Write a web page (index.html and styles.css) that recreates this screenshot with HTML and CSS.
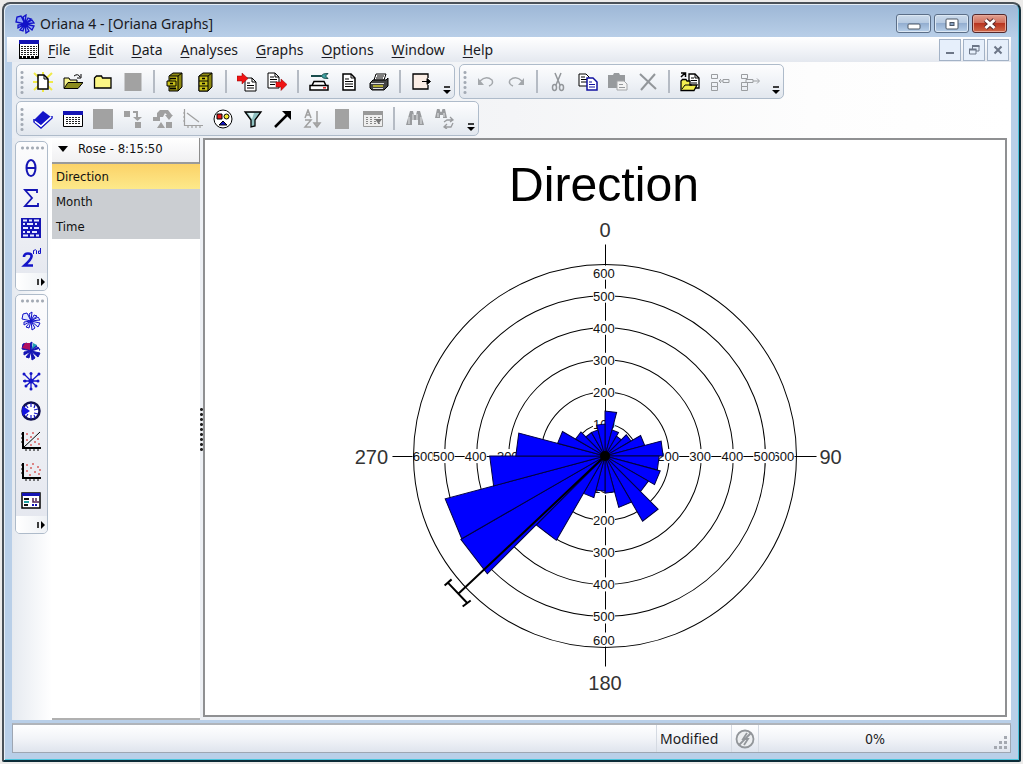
FILE: index.html
```html
<!DOCTYPE html>
<html lang="en">
<head>
<meta charset="utf-8">
<title>Oriana 4 - [Oriana Graphs]</title>
<link rel="stylesheet" href="styles.css">
</head>
<body>
<svg class="sprite" aria-hidden="true">
  <defs>
    <g id="rose-shape">
      <path d="M10 10 8 3 11 1ZM10 10 13 4 16 5ZM10 10 17 6 19 9ZM10 10 19 12 17 16ZM10 10 14 17 11 19ZM10 10 8 17 5 16ZM10 10 3 14 3 11ZM10 10 1 8 2 3 6 2Z"/>
    </g>
    <g id="table-shape">
      <path fill="#fff" stroke="#000" d="M.5 2.500h19v15h-19z"/>
      <path fill="#1414b4" d="M0 2h20v4H0z"/>
      <path stroke="#222" stroke-dasharray="2 1" d="M3 8.500h15M3 10.500h15M3 12.500h15M3 14.500h15"/>
    </g>
  </defs>
</svg>
<div class="window">
  <header class="titlebar">
    <svg class="icon app-icon" viewBox="0 0 20 20"><g fill="#8fa6f4" stroke="#1212c8" stroke-width="1.300"><use href="#rose-shape"/></g><circle cx="10" cy="10" r="2.500" fill="#1212c8"/></svg>
    <h1 class="title">Oriana 4 - [Oriana Graphs]</h1>
    <div class="caption-buttons">
      <button class="cap" aria-label="Minimize"><svg class="icon" viewBox="0 0 20 20"><rect x="4" y="10" width="12" height="5" rx="1" fill="#fff" stroke="#4b5665"/></svg></button>
      <button class="cap" aria-label="Maximize"><svg class="icon" viewBox="0 0 20 20"><rect x="4" y="5" width="12" height="10" rx="1" fill="#fff" stroke="#4b5665"/><rect x="8" y="8.500" width="4" height="3" fill="#8ba4c4" stroke="#4b5665"/></svg></button>
      <button class="cap cap-close" aria-label="Close"><svg class="icon" viewBox="0 0 20 20"><path d="M5.500 6l9 8M14.500 6l-9 8" stroke="#5a2a2a" stroke-width="5"/><path d="M5.500 6l9 8M14.500 6l-9 8" stroke="#fff" stroke-width="3"/></svg></button>
    </div>
  </header>
  <nav class="menubar">
    <svg class="icon doc-icon" viewBox="0 0 20 20"><path fill="#fff" stroke="#000" d="M.5.5h19v18H.5z"/><path fill="#1414b4" d="M0 0h20v4H0z"/><path stroke="#222" stroke-dasharray="2 1" stroke-width="1" d="M2 6.500h16M2 8.500h16M2 10.500h16M2 12.500h16M2 14.500h16"/><path stroke="#000" stroke-width="3" stroke-dasharray="3 1" d="M0 17.500h20"/></svg>
    <button class="menu"><u>F</u>ile</button>
    <button class="menu"><u>E</u>dit</button>
    <button class="menu"><u>D</u>ata</button>
    <button class="menu"><u>A</u>nalyses</button>
    <button class="menu"><u>G</u>raphs</button>
    <button class="menu"><u>O</u>ptions</button>
    <button class="menu"><u>W</u>indow</button>
    <button class="menu"><u>H</u>elp</button>
    <div class="mdi-buttons">
      <button class="mdi" aria-label="Minimize document"><svg class="icon" viewBox="0 0 20 20"><path d="M6 13h8" stroke="#6c7687" stroke-width="2"/></svg></button>
      <button class="mdi" aria-label="Restore document"><svg class="icon" viewBox="0 0 20 20"><path d="M8.500 9V6h6.500v5h-3M5.500 9.500h6.500v4.500H5.500z" fill="none" stroke="#6c7687"/><path d="M8 6h7.500M5 9.500h7.500" stroke="#6c7687" stroke-width="2"/></svg></button>
      <button class="mdi" aria-label="Close document"><svg class="icon" viewBox="0 0 20 20"><path d="M6.500 6.500l7 7M13.500 6.500l-7 7" stroke="#6c7687" stroke-width="2"/></svg></button>
    </div>
  </nav>
  <div class="client">
    <div class="toolbars">
      <div class="toolbar-row">
        <div class="toolbar" role="toolbar" aria-label="File">
          <button class="tool" aria-label="New"><svg class="icon" viewBox="0 0 20 20"><path d="M1 1l18 17M19 1L1 18M10 0v20M0 10h20" stroke="#f0ea48" stroke-width="2"/><path d="M5 3h6l4 4v10H5z" fill="#fff" stroke="#000" stroke-width="1.500"/><path d="M11 3v4h4" fill="none" stroke="#000"/></svg></button>
          <button class="tool" aria-label="Open"><svg class="icon" viewBox="0 0 20 20"><path d="M1 16V6h5l1 2h7v3" fill="#f6f28a" stroke="#000"/><path d="M1 16.500l4-6h15l-5 6z" fill="#8c8c1e" stroke="#000"/><path d="M11 4q4-3 6 1M18 2v4h-4" fill="none" stroke="#000"/></svg></button>
          <button class="tool" aria-label="Close file"><svg class="icon" viewBox="0 0 20 20"><path d="M1.500 16V6l2-2h5l1 2h8.500v10z" fill="#fbf685" stroke="#000" stroke-width="1.300"/></svg></button>
          <button class="tool" aria-label="Save" disabled><svg class="icon" viewBox="0 0 20 20"><path fill="#a2a2a2" d="M1.500 1h17v18h-17z"/></svg></button>
          <span class="sep"></span>
          <button class="tool" aria-label="Open database"><svg class="icon" viewBox="0 0 20 20"><path d="M4 4l4-3h9v14l-4 4H4z" fill="#8f8a12" stroke="#000"/><path d="M4 4h9v15M13 4l4-3M2 9h9v5H2z" fill="#c8c018" stroke="#000"/><path d="M5 6.500h6M5 16.500h6M5 11.500h3" stroke="#000" stroke-width="1.500"/></svg></button>
          <button class="tool" aria-label="Database"><svg class="icon" viewBox="0 0 20 20"><path d="M4 4l4-3h9v14l-4 4H4z" fill="#8f8a12" stroke="#000"/><path d="M4 4h9v15H4zM13 4l4-3M4 9h9M4 14h9" fill="#c8c018" stroke="#000"/><path d="M7 6.500h3M7 11.500h3M7 16.500h3" stroke="#000" stroke-width="1.500"/></svg></button>
          <span class="sep"></span>
          <button class="tool" aria-label="Import"><svg class="icon" viewBox="0 0 20 20"><path d="M8 6h7l4 4v9H8z" fill="#fff" stroke="#000"/><path d="M10 11h3M10 13.500h7M10 16h7M15 6v4h4" stroke="#000" fill="none"/><path d="M0 4h5V1l6 5.500L5 12V9H0z" fill="#f01414" stroke="#8c0000" stroke-width=".5"/></svg></button>
          <button class="tool" aria-label="Export"><svg class="icon" viewBox="0 0 20 20"><path d="M1 1h7l4 4v11H1z" fill="#fff" stroke="#000"/><path d="M3 5h4M3 7.500h7M3 10h7M3 12.500h5M8 1v4h4" stroke="#000" fill="none"/><path d="M9 10h5V7l6 5.500-6 6V15H9z" fill="#f01414" stroke="#8c0000" stroke-width=".5"/></svg></button>
          <span class="sep"></span>
          <button class="tool" aria-label="Page setup"><svg class="icon" viewBox="0 0 20 20"><path d="M2 4h10" stroke="#174b4b" stroke-width="2"/><path d="M12 4q2-3 7-2.500L16.500 4 19 6.500Q14 7 12 4z" fill="#3fa6a6" stroke="#174b4b"/><path d="M3 13.500l2-4h10l2 4M1 13.500h18V18H1z" fill="#fff" stroke="#000" stroke-width="1.500"/><path d="M14 15.800h3" stroke="#e02020" stroke-width="1.500"/></svg></button>
          <button class="tool" aria-label="Preview"><svg class="icon" viewBox="0 0 20 20"><path d="M4 2h8l4 4v12H4z" fill="#fff" stroke="#000" stroke-width="1.500"/><path d="M6 7h4M6 9.500h8M6 12h8M6 14.500h8M12 2v4h4" stroke="#000" fill="none"/></svg></button>
          <button class="tool" aria-label="Print"><svg class="icon" viewBox="0 0 20 20"><path d="M5 8l2-6h10l-2 6z" fill="#fff" stroke="#000"/><path d="M8 4h7M7 6h7" stroke="#000"/><path d="M1 11l3-3h13l2-2v8l-4 4H3l-2-2z" fill="#444" stroke="#000"/><path d="M2 11.500h13M4 16.500h10" stroke="#ddd"/><path d="M4 14h10" stroke="#d8d030" stroke-width="1.500"/></svg></button>
          <span class="sep"></span>
          <button class="tool" aria-label="Exit"><svg class="icon" viewBox="0 0 20 20"><path d="M17 6V2H2v15h15v-4" fill="#fbeee6" stroke="#000" stroke-width="1.300"/><path d="M11 9.500h8M16 6.500l3.500 3-3.500 3z" fill="#000" stroke="#000"/></svg></button>
          <button class="overflow" aria-label="More file tools"><svg class="chev" viewBox="0 0 8 8"><path d="M1 1h6" stroke="#000" stroke-width="1.500"/><path d="M0 4h8L4 8z"/></svg></button>
        </div>
        <div class="toolbar" role="toolbar" aria-label="Edit">
          <button class="tool" aria-label="Undo" disabled><svg class="icon" viewBox="0 0 20 20"><path d="M4 9q6-6 12-1 2 4-3 6" fill="none" stroke="#a4a8ac" stroke-width="1.500"/><path d="M2 6v7h6z" fill="#a4a8ac"/></svg></button>
          <button class="tool" aria-label="Redo" disabled><svg class="icon" viewBox="0 0 20 20"><path d="M16 9Q10 3 4 8q-2 4 3 6" fill="none" stroke="#a4a8ac" stroke-width="1.500"/><path d="M18 6v7h-6z" fill="#a4a8ac"/></svg></button>
          <span class="sep"></span>
          <button class="tool" aria-label="Cut" disabled><svg class="icon" viewBox="0 0 20 20"><path d="M7 1l5 12M13 1L8 13" stroke="#92969a" stroke-width="1.500"/><g fill="none" stroke="#92969a" stroke-width="1.500"><ellipse cx="6.500" cy="15.500" rx="2" ry="3"/><ellipse cx="13.500" cy="15.500" rx="2" ry="3"/></g></svg></button>
          <button class="tool" aria-label="Copy"><svg class="icon" viewBox="0 0 20 20"><path d="M1 2h7l3 3v9H1z" fill="#fff" stroke="#000"/><path d="M3 5h4M3 7.500h6M3 10h6" stroke="#000"/><path d="M9 6h6l4 4v8H9z" fill="#fff" stroke="#1212a0" stroke-width="1.500"/><path d="M11 10h3M11 12.500h6M11 15h6" stroke="#1212a0"/></svg></button>
          <button class="tool" aria-label="Paste" disabled><svg class="icon" viewBox="0 0 20 20"><path d="M0 3h5l1-2h5l1 2h5v13H0z" fill="#979a9d"/><path d="M9 9h7l3 3v6H9z" fill="#f4f4f4" stroke="#a4a6a8"/><path d="M11 12.500h4M11 15.500h6" stroke="#979a9d"/></svg></button>
          <button class="tool" aria-label="Delete" disabled><svg class="icon" viewBox="0 0 20 20"><path d="M2 2l16 15M17 2L3 18" stroke="#92969a" stroke-width="2"/></svg></button>
          <span class="sep"></span>
          <button class="tool" aria-label="Open data"><svg class="icon" viewBox="0 0 20 20"><path d="M9 2h6l4 4v10H9z" fill="#fff" stroke="#000" stroke-width="1.300"/><path d="M11 6h3M11 8.500h6M11 11h6M15 2v4h4" stroke="#000" fill="none"/><path d="M1 18V9l1.500-1.500H6L7 9h3v4h7l-3 5.500H1z" fill="#f2ee50" stroke="#000" stroke-width="1.300"/><path d="M2 17l3-4h7" fill="none" stroke="#000"/><path d="M1 5l4-4M1 1h4.500v4" fill="none" stroke="#000" stroke-width="1.500"/></svg></button>
          <button class="tool" aria-label="Insert variable" disabled><svg class="icon" viewBox="0 0 20 20"><path d="M1.500 2.500h6v4h-6zM1.500 10.500h6v4h-6zM1.500 14.500h6v4h-6zM13 7.500h6v3h-6zM13 9H9M11 7L9 9l2 2" fill="none" stroke="#9a9da0"/></svg></button>
          <button class="tool" aria-label="Remove variable" disabled><svg class="icon" viewBox="0 0 20 20"><path d="M1.500 2.500h6v4h-6zM1.500 10.500h6v4h-6zM1.500 14.500h6v4h-6zM6 7.500h7v3H6zM13 9h6M17 6.500L19.500 9 17 11.500" fill="none" stroke="#9a9da0"/></svg></button>
          <button class="overflow" aria-label="More edit tools"><svg class="chev" viewBox="0 0 8 8"><path d="M1 1h6" stroke="#000" stroke-width="1.500"/><path d="M0 4h8L4 8z"/></svg></button>
        </div>
      </div>
      <div class="toolbar-row">
        <div class="toolbar" role="toolbar" aria-label="Data">
          <button class="tool" aria-label="Notebook"><svg class="icon" viewBox="0 0 20 20"><path d="M1 11l9-9 8 6-10 9z" fill="#1414c8"/><path d="M1 10v3l7 6L19 9V7" fill="none" stroke="#1414c8" stroke-width="1.500"/><path d="M2 12.500l6 4.500 10-9" stroke="#fff" stroke-width="1.500" fill="none"/></svg></button>
          <button class="tool" aria-label="Data editor"><svg class="icon" viewBox="0 0 20 20"><use href="#table-shape"/></svg></button>
          <button class="tool" aria-label="Stop" disabled><svg class="icon" viewBox="0 0 20 20"><path fill="#a2a2a2" d="M0 0h20v20H0z"/></svg></button>
          <button class="tool" aria-label="Transform" disabled><svg class="icon" viewBox="0 0 20 20"><path fill="#a0a0a0" d="M1 2h6v6H1zM12 13h6v6h-6z"/><path d="M10 3h4v6" fill="none" stroke="#a0a0a0" stroke-width="2"/><path d="M10 8h9l-4.500 4z" fill="#a0a0a0"/></svg></button>
          <button class="tool" aria-label="Recode" disabled><svg class="icon" viewBox="0 0 20 20"><path fill="#a0a0a0" d="M4 4l3-3h8l4 5h1l-4 5-4-5h2l-2-2-2 4H7v4H0V8h4zM13 13h6v6h-6zM4 19l4-6 4 6z"/></svg></button>
          <button class="tool" aria-label="Regression" disabled><svg class="icon" viewBox="0 0 20 20"><path d="M1.500 0v16.500H20M4 4l12 9M0 4h2M0 8h2M0 12h2M5 16v3M9 16v3M13 16v3M17 16v3" fill="none" stroke="#a0a0a0" stroke-width="1.200"/></svg></button>
          <button class="tool" aria-label="Graph shapes"><svg class="icon" viewBox="0 0 20 20"><circle cx="10" cy="10" r="9" fill="#fff" stroke="#000"/><path d="M4 5h5v5H4z" fill="#e81818" stroke="#000"/><circle cx="13.500" cy="7.500" r="2.500" fill="#f4ec30" stroke="#000"/><path d="M6 16l4-4 4 4z" fill="#1414c8" stroke="#000"/></svg></button>
          <button class="tool" aria-label="Filter"><svg class="icon" viewBox="0 0 20 20"><path d="M2 3h16l-6 8v6l-4 1v-7z" fill="#8fc0c0" stroke="#000" stroke-width="1.300"/><path d="M5 4h6l-2 6z" fill="#e4f6f6"/></svg></button>
          <button class="tool" aria-label="Arrow"><svg class="icon" viewBox="0 0 20 20"><path d="M2 18L14 6" stroke="#000" stroke-width="2.500"/><path d="M9 2h9v9l-3-3-3-3z"/></svg></button>
          <button class="tool" aria-label="Sort" disabled><svg class="icon" viewBox="0 0 20 20"><path d="M2 9l3-8 3 8M3 6h4M2 11h6l-6 7h6M14 2v15M11 14l3 4 3-4z" fill="none" stroke="#a0a0a0" stroke-width="1.500"/></svg></button>
          <button class="tool" aria-label="Column" disabled><svg class="icon" viewBox="0 0 20 20"><path fill="#a2a2a2" d="M2 0h14v20H2z"/></svg></button>
          <button class="tool" aria-label="Choose cells" disabled><svg class="icon" viewBox="0 0 20 20"><path d="M.5 2.500h19v15H.5z" fill="#eee" stroke="#999"/><path d="M0 2h20v4H0z" fill="#999"/><path stroke="#888" stroke-dasharray="2 2" d="M3 8.500h15M3 10.500h15M3 12.500h15M3 14.500h15"/><path d="M12 10h7l-3.500 5z" fill="#777"/></svg></button>
          <span class="sep"></span>
          <button class="tool" aria-label="Find" disabled><svg class="icon" viewBox="0 0 20 20"><path d="M5 2h3l1 4h2l1-4h3l4 14h-6v-5H7v5H1z" fill="#999b9e"/><path d="M4 8v7M8 5v6M12 5v6M16 8v7" stroke="#e4e6e8"/></svg></button>
          <button class="tool" aria-label="Replace" disabled><svg class="icon" viewBox="0 0 20 20"><path d="M2 0h2.500l1 3h1l1-3H10l2 9H8V6H5v3H0z" fill="#999b9e"/><path d="M3 4v4M9 4v4" stroke="#e4e6e8"/><path d="M9 13l3-2h5M15 8l3 3-3 2M18 14l-2 4H9M12 15l-3 3 3 2" fill="none" stroke="#999b9e" stroke-width="1.300"/></svg></button>
          <button class="overflow" aria-label="More data tools"><svg class="chev" viewBox="0 0 8 8"><path d="M1 1h6" stroke="#000" stroke-width="1.500"/><path d="M0 4h8L4 8z"/></svg></button>
        </div>
      </div>
    </div>
    <div class="workspace">
      <div class="side-tools">
        <div class="vtoolbar" role="toolbar" aria-label="Statistics">
          <button class="tool" aria-label="Circular statistics"><svg class="icon" viewBox="0 0 20 20"><ellipse cx="10" cy="10" rx="4.500" ry="8" fill="none" stroke="#1414b4" stroke-width="2"/><path d="M6 10h8" stroke="#1414b4" stroke-width="2"/></svg></button>
          <button class="tool" aria-label="Linear statistics"><svg class="icon" viewBox="0 0 20 20"><path d="M16 5V2H4l7 8-7 8h13v-3" fill="none" stroke="#1414b4" stroke-width="1.800"/></svg></button>
          <button class="tool" aria-label="Multisample"><svg class="icon" viewBox="0 0 20 20"><path fill="#1414b4" d="M0 0h20v20H0z"/><path d="M2 2.500h4M8 2.500h3M13 2.500h5M2 6h2M6 6h6M14 6h2M2 10h5M9 10h2M13 10h5M2 14h2M6 14h3M11 14h5M2 17.500h5M9 17.500h4M15 17.500h3" stroke="#e8eaff" stroke-width="2"/></svg></button>
          <button class="tool" aria-label="Second order statistics"><svg class="icon" viewBox="0 0 20 20"><path d="M3 9q0-3.500 4-3.500t3.500 3q0 2.500-7 9H12" fill="none" stroke="#1414c8" stroke-width="2.600"/><path d="M12.500 6V2.500q3-1.500 3 0V6M19.500 0v5.500h-2V3h2" fill="none" stroke="#1414c8"/></svg></button>
          <button class="voverflow" aria-label="More statistics"><svg class="chev" viewBox="0 0 8 8"><path d="M1 1v6" stroke="#000" stroke-width="1.500"/><path d="M4 0v8l4-4z"/></svg></button>
        </div>
        <div class="vtoolbar" role="toolbar" aria-label="Graphs">
          <button class="tool" aria-label="Rose diagram"><svg class="icon" viewBox="0 0 20 20"><g fill="#e4eaff" stroke="#1212c8"><use href="#rose-shape"/></g></svg></button>
          <button class="tool" aria-label="Stacked rose"><svg class="icon" viewBox="0 0 20 20"><g fill="#1414b4" stroke="#1414b4"><use href="#rose-shape"/></g><path d="M9 9L1 7l3-5h5z" fill="#b01060"/><path d="M11 8l1-6 4 2z" fill="#20a0b0"/><path d="M12 10l6-2v2z" fill="#fff"/></svg></button>
          <button class="tool" aria-label="Raw data plot"><svg class="icon" viewBox="0 0 20 20"><path d="M10 2v16M2 10h16M3 3l12 12M18 3L5 15" stroke="#1414c8" stroke-width="1.300"/><g fill="#1414c8"><circle cx="10" cy="10" r="2.500"/><circle cx="10" cy="2.500" r="1.500"/><circle cx="10" cy="18" r="1.500"/><circle cx="4" cy="10" r="1.500"/><circle cx="17" cy="10" r="1.500"/><circle cx="3" cy="3" r="1.500"/><circle cx="18" cy="3" r="1.500"/><circle cx="5" cy="15" r="1.500"/><circle cx="15" cy="15" r="1.500"/></g></svg></button>
          <button class="tool" aria-label="Circular histogram"><svg class="icon" viewBox="0 0 20 20"><circle cx="10" cy="10" r="8.500" fill="#fff" stroke="#101050" stroke-width="2.500"/><path d="M9 10L2 5q-2 5 0 10z" fill="#1414e0"/><path d="M10 2v4M10 14v4M14 4l-1 3M17 8l-4 1M17 13l-4-1M14 17l-1-3M5 16l2-3M5 4l2 3" stroke="#1414c8" stroke-width="1.200"/></svg></button>
          <button class="tool" aria-label="Distribution plot"><svg class="icon" viewBox="0 0 20 20"><path d="M2 1v16h18" fill="none" stroke="#000" stroke-width="2"/><path d="M2 17L19 1" stroke="#000"/><path d="M0 3h2M0 7h2M0 11h2M4 19h15" stroke="#000" stroke-dasharray="2 2"/><path d="M5 3h2M11 2h2M5 9h2M9 6h2M16 8h2M13 11h2M17 13h2M9 14h2" stroke="#d86060" stroke-width="1.500"/></svg></button>
          <button class="tool" aria-label="Scatter plot"><svg class="icon" viewBox="0 0 20 20"><path d="M2 2v15h18" fill="none" stroke="#000" stroke-width="2"/><path d="M0 4h2M0 8h2M0 12h2M4 19h15" stroke="#000" stroke-dasharray="2 2"/><path d="M5 4h2M11 3h2M5 10h2M9 7h2M16 6h2M13 11h2M17 13h2M8 14h2M18 9h2" stroke="#d86060" stroke-width="1.500"/></svg></button>
          <button class="tool" aria-label="Graph gallery"><svg class="icon" viewBox="0 0 20 20"><path d="M1 2h18v15H1z" fill="#fff" stroke="#000" stroke-width="1.500"/><path d="M1 2h18v3H1z" fill="#1414b4"/><path d="M3 8h5M3 14h4" stroke="#111" stroke-width="2" /><path d="M3 11h5" stroke="#20a0a0" stroke-width="2"/><path d="M12 7v4h6M15 7v3" fill="none" stroke="#502050" stroke-width="1.500"/><path d="M11 14h6" stroke="#1414b4" stroke-width="2" stroke-dasharray="2 1"/></svg></button>
          <button class="voverflow" aria-label="More graphs"><svg class="chev" viewBox="0 0 8 8"><path d="M1 1v6" stroke="#000" stroke-width="1.500"/><path d="M4 0v8l4-4z"/></svg></button>
        </div>
      </div>
      <aside class="graph-list">
        <button class="list-head"><svg class="caret" viewBox="0 0 10 6"><path d="M0 0h10L5 6z"/></svg>Rose - 8:15:50</button>
        <button class="list-item selected">Direction</button>
        <button class="list-item">Month</button>
        <button class="list-item">Time</button>
      </aside>
      <div class="splitter"></div>
      <main class="graph-pane">
        <svg id="chart" class="chart" viewBox="206 141 798 573" role="img" aria-label="Rose diagram of Direction"></svg>
      </main>
    </div>
  </div>
  <footer class="statusbar">
    <span class="status-main"></span>
    <span class="status-cell modified">Modified</span>
    <span class="status-cell state"><svg class="icon" viewBox="0 0 20 20"><circle cx="10" cy="10" r="8.500" fill="#eceef0" stroke="#92969a" stroke-width="1.800"/><path d="M4 16L16 4" stroke="#92969a" stroke-width="1.800"/><path d="M12 4l-4 6h5l-4 6" fill="none" stroke="#92969a" stroke-width="1.800"/></svg></span>
    <span class="status-cell progress">0%</span>
    <svg class="size-grip" viewBox="0 0 14 14"><path fill="#a4a8b0" d="M11 1h3v3h-3zM11 6h3v3h-3zM6 6h3v3H6zM11 11h3v3h-3zM6 11h3v3H6zM1 11h3v3H1z"/></svg>
  </footer>
</div>
<script src="chart.js"></script>
</body>
</html>
```
FILE: styles.css
```css
* { box-sizing: border-box; }
html, body { height: 100%; }
body {
  margin: 0;
  padding: 2px;
  background: #ecebea;
  font-family: "Noto Sans", "Open Sans", sans-serif;
  font-size: 14px;
  color: #1a1a22;
}
button {
  margin: 0;
  padding: 0;
  border: 0;
  background: none;
  font: inherit;
  color: inherit;
}
.sprite { display: block; width: 0; height: 0; position: absolute; }
.icon { display: block; width: 20px; height: 20px; flex: none; }
.chev { display: block; width: 8px; height: 8px; }

.window {
  display: flex;
  flex-direction: column;
  min-height: 100%;
  padding: 0 8px 7px 3px;
  border: 2px solid #4a5158;
  border-right-color: #17303c;
  border-bottom-color: #0c2c38;
  border-radius: 8px 8px 2px 2px;
  background: linear-gradient(#9db7d6, #b9cfe8 34px, #b9cfe8);
  box-shadow: inset 1px 1px 0 #e6eef6, inset -1px -1px 0 #4cc4dc;
}
.titlebar {
  display: flex;
  align-items: center;
  height: 33px;
  padding: 6px 4px 0 8px;
}
.title { flex: 1; margin: 0 0 0 5px; font-size: 14px; font-weight: 400; }
.caption-buttons { display: flex; gap: 3px; }
.cap {
  display: flex;
  align-items: center;
  justify-content: center;
  width: 35px;
  height: 19px;
  border: 1px solid #5c6f88;
  border-radius: 3px;
  background: linear-gradient(#cddcec, #b4c8e0 50%, #93aed0 50%, #b8d0ea);
  box-shadow: inset 0 0 0 1px #dce8f4;
}
.cap-close {
  border-color: #53282c;
  background: linear-gradient(#e0a090, #cf6a58 50%, #b83420 50%, #d06848);
  box-shadow: inset 0 0 0 1px #e8a898;
}
.menubar {
  display: flex;
  align-items: center;
  height: 25px;
  padding: 0 2px 0 12px;
  background: linear-gradient(#ffffff, #f2f4f8 50%, #e4e8ef);
}
.menu { padding: 0 9px; }
.menu u { text-underline-offset: 2px; }
.mdi-buttons { display: flex; gap: 2px; margin-left: auto; }
.mdi {
  display: flex;
  align-items: center;
  justify-content: center;
  width: 22px;
  height: 22px;
  border: 1px solid #a3b2c6;
  background: #e6effb;
}

.client {
  display: flex;
  flex: 1;
  flex-direction: column;
  margin-left: 5px;
  background: linear-gradient(90deg, #e9edf3, #f4f5f7 50%, #fdfdfd 80%, #ffffff);
}
.toolbars { display: flex; flex-direction: column; gap: 2px; padding: 2px 4px; }
.toolbar-row { display: flex; gap: 4px; }
.toolbar {
  display: flex;
  height: 35px;
  padding-left: 11px;
  border: 1px solid #aebbca;
  border-radius: 5px;
  background:
    radial-gradient(circle, #a3aab4 1px, transparent 2px) 3px 5px / 4px 5px no-repeat,
    radial-gradient(circle, #a3aab4 1px, transparent 2px) 3px 10px / 4px 5px no-repeat,
    radial-gradient(circle, #a3aab4 1px, transparent 2px) 3px 15px / 4px 5px no-repeat,
    radial-gradient(circle, #a3aab4 1px, transparent 2px) 3px 20px / 4px 5px no-repeat,
    radial-gradient(circle, #a3aab4 1px, transparent 2px) 3px 25px / 4px 5px no-repeat,
    linear-gradient(#fdfdfe, #f0f3f7 50%, #e2e7ee);
}
.tool { display: flex; align-items: center; justify-content: center; width: 30px; }
.sep { width: 2px; margin: 5px; background: #b5bbc4; }
.overflow { width: 18px; display: flex; align-items: flex-end; justify-content: center; padding: 0 0 4px 4px; }

.workspace { display: flex; flex: 1; }
.side-tools {
  display: flex;
  flex-direction: column;
  gap: 3px;
  width: 40px;
  padding: 3px 4px 0 3px;
  background: linear-gradient(90deg, #e6eaf0, #ffffff);
}
.vtoolbar {
  display: flex;
  flex-direction: column;
  align-items: stretch;
  padding-top: 11px;
  border: 1px solid #aebbca;
  border-radius: 5px;
  background:
    radial-gradient(circle, #a3aab4 1px, transparent 2px) 4px 4px / 5px 4px no-repeat,
    radial-gradient(circle, #a3aab4 1px, transparent 2px) 9px 4px / 5px 4px no-repeat,
    radial-gradient(circle, #a3aab4 1px, transparent 2px) 14px 4px / 5px 4px no-repeat,
    radial-gradient(circle, #a3aab4 1px, transparent 2px) 19px 4px / 5px 4px no-repeat,
    radial-gradient(circle, #a3aab4 1px, transparent 2px) 24px 4px / 5px 4px no-repeat,
    linear-gradient(#fcfcfd, #e3e6ee);
}
.vtoolbar .tool { width: 30px; height: 30px; }
.voverflow {
  display: flex;
  align-items: center;
  justify-content: flex-end;
  height: 17px;
  padding-right: 2px;
  background: linear-gradient(90deg, #ffffff, #eef1f5);
  border-radius: 0 0 4px 4px;
}
.graph-list {
  display: flex;
  flex-direction: column;
  width: 148px;
  background: #ffffff;
  border-bottom: 2px solid #b0b0b0;
  font-family: "DejaVu Sans Condensed", "DejaVu Sans", sans-serif;
  font-size: 13px;
  font-stretch: condensed;
  color: #111111;
}
.list-head {
  display: flex;
  align-items: center;
  gap: 10px;
  height: 26px;
  padding: 0 6px 3px;
  border-right: 1px solid #8c8c8c;
  border-bottom: 2px solid #9a9a9a;
  background: linear-gradient(#ffffff, #f0f0f2);
}
.caret { width: 10px; height: 6px; }
.list-item { height: 25px; padding: 0 4px; background: #cbced2; text-align: left; }
.list-item.selected { background: linear-gradient(#fbd268, #fde98a); }
.splitter {
  width: 3px;
  background: radial-gradient(circle, #222222 1px, transparent 2px) center / 3px 5px;
  background-repeat: repeat-y;
  height: 43px;
  align-self: center;
}
.graph-pane {
  display: flex;
  flex: 1;
  min-width: 0;
  margin-right: 4px;
  margin-bottom: 3px;
  border: 2px solid #8f9092;
  background: #ffffff;
}
.chart { display: block; flex: 1; width: 100%; min-width: 0; min-height: 0; font-family: "Liberation Sans", Arial, sans-serif; }
.chart .ring { fill: none; stroke: #000000; }
.chart .axis { stroke: #000000; }
.chart .mask { fill: #ffffff; }
.chart .wedge { fill: #0000ff; stroke: #000040; }
.chart .mean { fill: none; stroke: #000000; stroke-width: 2; }
.chart text { text-anchor: middle; fill: #111111; }
.chart .tick { font-size: 13px; }
.chart .degree { font-size: 20px; fill: #333333; }
.chart .heading { font-size: 48px; fill: #000000; }

.statusbar {
  display: flex;
  height: 30px;
  margin: 3px 0 0 5px;
  border: 1px solid #9ea6b2;
  border-top: 2px solid #b0b4ba;
  background: linear-gradient(#ffffff, #f2f4f8 50%, #dfe4ed);
}
.status-main { flex: 1; }
.status-cell { display: flex; align-items: center; border-left: 1px solid #d5dae2; }
.modified { width: 75px; padding-left: 3px; }
.state { width: 27px; justify-content: center; }
.progress { width: 233px; justify-content: center; font-family: "DejaVu Sans Condensed", "DejaVu Sans", sans-serif; font-stretch: condensed; font-size: 14px; }
.size-grip { width: 14px; height: 14px; align-self: flex-end; margin: 0 3px 3px 2px; }
```
FILE: chart.js
```js
const NS = "http://www.w3.org/2000/svg";
const chart = document.getElementById("chart");
const cx = 605, cy = 456, unit = 32;

// Radius of each 15 degree class, clockwise from north.
const classes = [45, 27, 23, 30, 41, 58, 54, 57, 50, 75, 53, 37,
                 35, 43, 97, 166, 165, 115, 89, 49, 34, 27, 27, 32];

function add(tag, cls, attrs, text) {
  const el = document.createElementNS(NS, tag);
  el.setAttribute("class", cls);
  for (const key in attrs) el.setAttribute(key, attrs[key]);
  if (text !== undefined) el.textContent = text;
  chart.appendChild(el);
}

function point(r, deg) {
  const a = deg * Math.PI / 180;
  return (cx + r * Math.sin(a)).toFixed(1) + " " + (cy - r * Math.cos(a)).toFixed(1);
}

for (let i = 1; i <= 5; i++) add("circle", "ring", { cx, cy, r: i * unit });
add("path", "axis", { d: `M${cx}.5 245V666M393 ${cy}.5H816` });

function tick(x, y, value) {
  add("rect", "mask", { x: x - 11, y: y - 7, width: 22, height: 14 });
  add("text", "tick", { x, y: y + 5 }, value);
}
for (let i = 6; i >= 1; i--) {
  const r = i === 6 ? 183 : i * unit;
  tick(cx - 1, cy - r, i * 100);
  tick(cx - 1, cy + r, i * 100);
  tick(cx - 1 - r + (i === 6 ? 3 : 0), cy, i * 100);
  tick(cx - 1 + r - (i === 6 ? 4 : 0), cy, i * 100);
}
add("circle", "ring", { cx, cy, r: 191 });

classes.forEach((r, i) => {
  add("path", "wedge", { d: `M${cx} ${cy}L${point(r, i * 15)}L${point(r, i * 15 + 15)}Z` });
});
add("circle", "hub", { cx, cy, r: 5 });
add("path", "mean", { d: `M${cx} ${cy}L459 593M448 582L468 603M445 585L452 579M463 606L471 600` });

add("text", "heading", { x: 604, y: 202 }, "Direction");
add("text", "degree", { x: 605, y: 237 }, "0");
add("text", "degree", { x: 830, y: 464 }, "90");
add("text", "degree", { x: 605, y: 689 }, "180");
add("text", "degree", { x: 372, y: 464 }, "270");
```
